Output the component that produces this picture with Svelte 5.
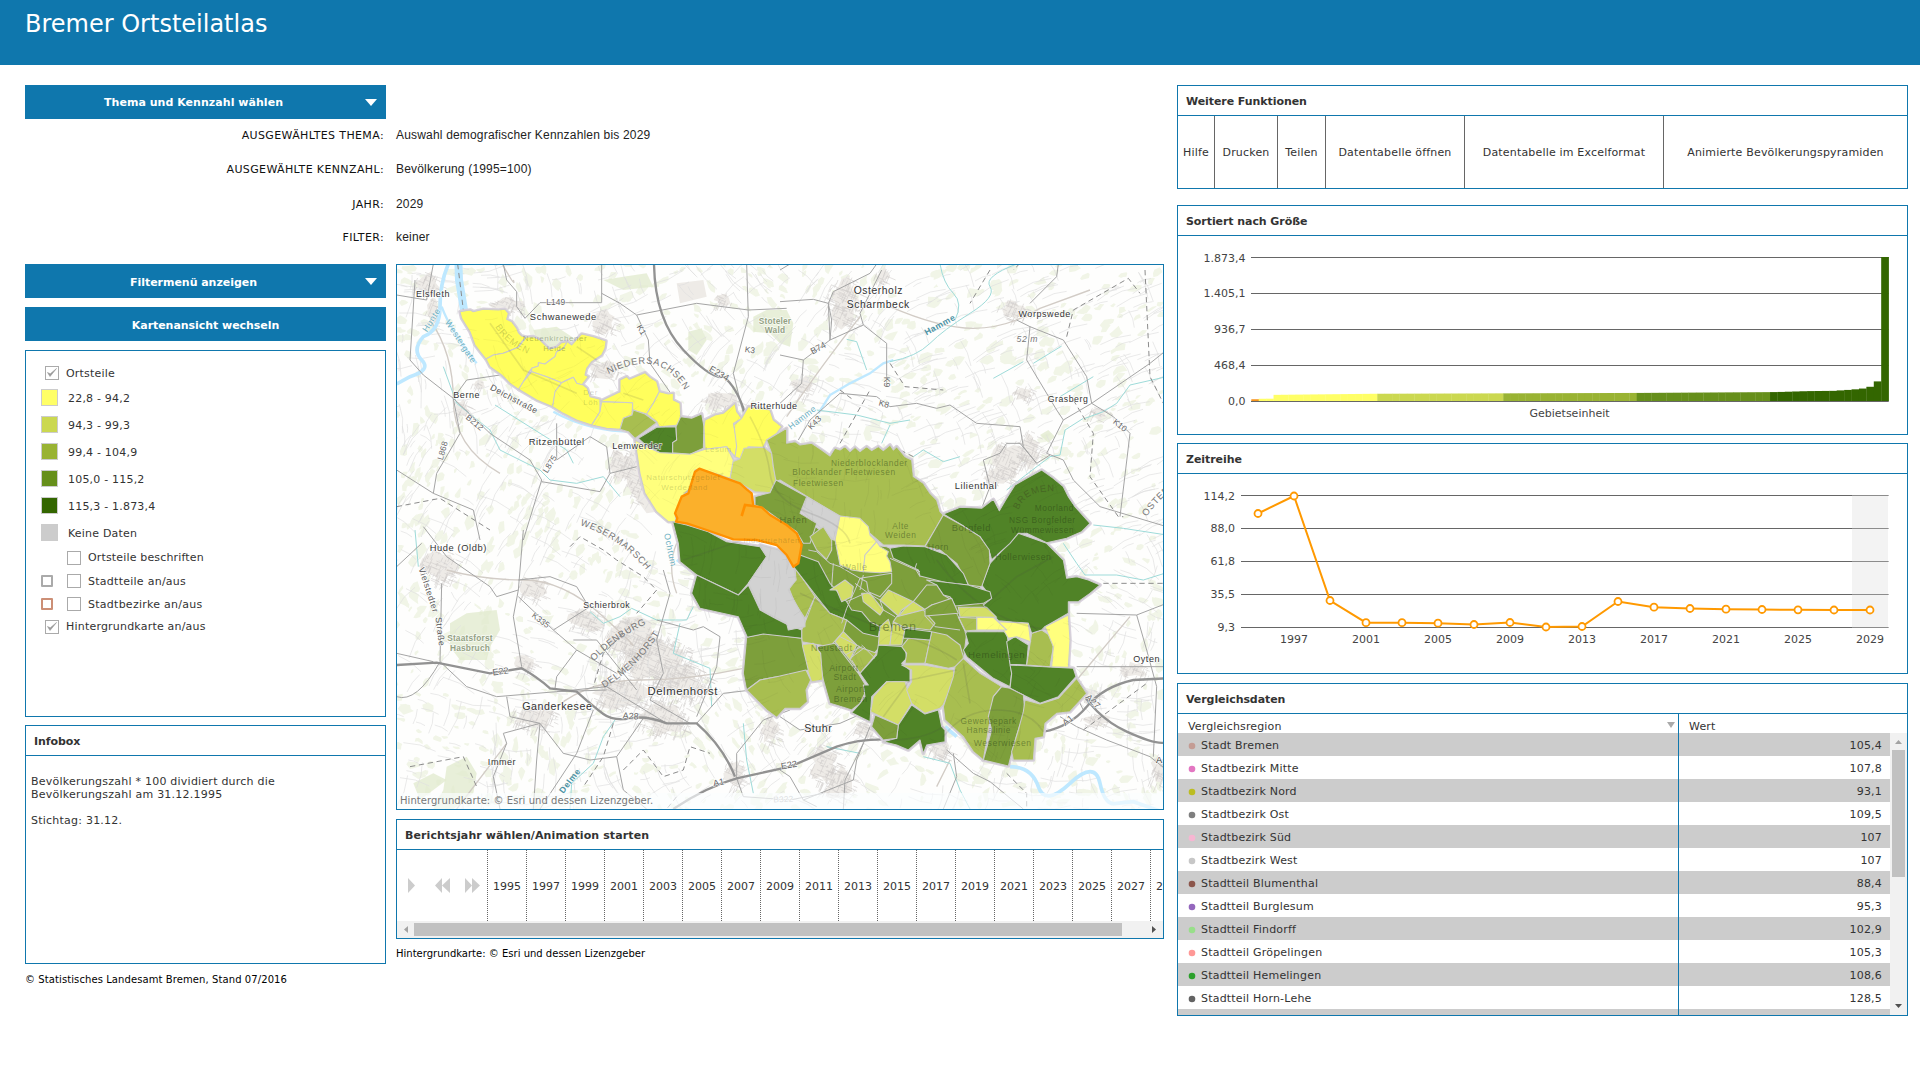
<script>
  const classes = [
    { color: '#ffff66', label: '22,8 - 94,2' },
    { color: '#cbd850', label: '94,3 - 99,3' },
    { color: '#99b333', label: '99,4 - 104,9' },
    { color: '#668f1b', label: '105,0 - 115,2' },
    { color: '#336600', label: '115,3 - 1.873,4' },
    { color: '#cccccc', label: 'Keine Daten' }
  ];

  const selection = [
    ['AUSGEWÄHLTES THEMA:', 'Auswahl demografischer Kennzahlen bis 2029'],
    ['AUSGEWÄHLTE KENNZAHL:', 'Bevölkerung (1995=100)'],
    ['JAHR:', '2029'],
    ['FILTER:', 'keiner']
  ];

  const functions = ['Hilfe', 'Drucken', 'Teilen', 'Datentabelle öffnen', 'Datentabelle im Excelformat', 'Animierte Bevölkerungspyramiden'];

  const years = Array.from({ length: 18 }, (_, i) => 1995 + i * 2);

  const rows = [
    ['Stadt Bremen', '105,4', '#c49c94'],
    ['Stadtbezirk Mitte', '107,8', '#e377c2'],
    ['Stadtbezirk Nord', '93,1', '#bcbd22'],
    ['Stadtbezirk Ost', '109,5', '#7f7f7f'],
    ['Stadtbezirk Süd', '107', '#f7b6d2'],
    ['Stadtbezirk West', '107', '#c7c7c7'],
    ['Stadtteil Blumenthal', '88,4', '#8c564b'],
    ['Stadtteil Burglesum', '95,3', '#9467bd'],
    ['Stadtteil Findorff', '102,9', '#98df8a'],
    ['Stadtteil Gröpelingen', '105,3', '#ff9896'],
    ['Stadtteil Hemelingen', '108,6', '#2ca02c'],
    ['Stadtteil Horn-Lehe', '128,5', '#636363'],
    ['', '', '']
  ];

  // Sorted bar chart: 86 districts, grouped by class
  const tail = [116, 118, 121, 124, 127, 129, 130, 131, 132, 138, 144, 152, 162, 185, 255, 1873.4];
  const ramp = (n, a, b) => Array.from({ length: n }, (_, i) => a + ((b - a) * i) / (n - 1));
  const bars = [
    [22.8, '#f7941d'],
    [29, classes[0].color], [30, classes[0].color],
    ...ramp(14, 80, 94).map((v) => [v, classes[0].color]),
    ...ramp(17, 94.3, 99.3).map((v) => [v, classes[1].color]),
    ...ramp(18, 99.4, 104.9).map((v) => [v, classes[2].color]),
    ...ramp(18, 105, 115.2).map((v) => [v, classes[3].color]),
    ...tail.map((v) => [v, classes[4].color])
  ];
  const barWidth = 637.3 / 86;
  const barTicks = ['1.873,4', '1.405,1', '936,7', '468,4', '0,0'];

  const seriesTicks = ['114,2', '88,0', '61,8', '35,5', '9,3'];
  const seriesY = [39.5, 22, 126.5, 148.7, 148.7, 149.2, 150.5, 148.5, 153, 152.5, 127.5, 133.2, 134.5, 135.2, 135.5, 135.8, 136, 136];
  const series = seriesY.map((y, i) => [80 + i * 36, y]);

  // Deterministic texture of fields, meadows and lanes for the base map
  let seed = 41;
  const rnd = () => ((seed = (seed * 16807) % 2147483647) / 2147483647);
  const slope = (x, y) => (x > 1500 && y < 900 ? -0.52 : x < 700 && y > 500 && y < 1000 ? -1.15 : (Math.floor(x / 300) + Math.floor(y / 260)) * 1.3);
  const meadows = Array.from({ length: 1700 }, () => {
    const x = rnd() * 2320, y = rnd() * 1650, s = 7 + rnd() * 15, a = slope(x, y);
    const pts = [];
    for (let k = 0; k < 7; k++) {
      const t = (k * Math.PI * 2) / 7, u = Math.cos(t) * s * (0.6 + rnd() * 0.8), v = Math.sin(t) * s * (0.2 + rnd() * 0.7);
      pts.push(`${(x + u * Math.cos(a) - v * Math.sin(a)).toFixed(0)},${(y + u * Math.sin(a) + v * Math.cos(a)).toFixed(0)}`);
    }
    return pts.join(' ');
  });
  let lanes = '';
  for (let i = 0; i < 1500; i++) {
    const x = rnd() * 2320, y = rnd() * 1650;
    const a = slope(x, y) + (rnd() > 0.72 ? Math.PI / 2 : 0) + (rnd() - 0.5) * 0.25, l = 25 + rnd() * 85;
    lanes += `M${x.toFixed(0)} ${y.toFixed(0)}l${(Math.cos(a) * l * 0.5).toFixed(0)} ${(Math.sin(a) * l * 0.5).toFixed(0)} ${(Math.cos(a + 0.25) * l * 0.5).toFixed(0)} ${(Math.sin(a + 0.25) * l * 0.5).toFixed(0)}`;
  }
  const towns = [[115, 70, 40, 35], [130, 150, 22, 35], [350, 135, 55, 25], [640, 190, 38, 45], [215, 445, 25, 28], [270, 375, 22, 15], [640, 330, 55, 30], [990, 425, 60, 32], [1000, 120, 28, 22], [690, 615, 35, 60], [735, 640, 28, 90], [1365, 130, 55, 90], [1240, 375, 38, 35], [1480, 45, 22, 28], [1870, 150, 45, 35], [1900, 400, 35, 25], [1860, 590, 60, 50], [1920, 570, 35, 60], [1830, 640, 55, 35], [2125, 460, 28, 22], [150, 920, 60, 55], [430, 980, 45, 38], [590, 1080, 60, 38], [730, 1130, 85, 60], [800, 1200, 110, 85], [690, 1300, 90, 50], [820, 1370, 85, 60], [870, 1270, 90, 60], [430, 1370, 70, 42], [400, 1210, 35, 28], [1035, 1540, 35, 45], [1140, 1410, 30, 50], [1300, 1510, 45, 60], [1345, 1570, 50, 60], [1425, 1410, 40, 30], [1650, 1470, 40, 35], [2230, 1230, 45, 25], [2100, 1310, 30, 25], [2320, 1530, 42, 50], [2120, 1380, 45, 22]];
  let streets = '';
  const townShapes = [];
  for (const [cx, cy, rx, ry] of towns) {
    const outline = [];
    for (let k = 0; k < 14; k++) {
      const t = (k * Math.PI * 2) / 14, r = 0.5 + rnd() * 0.55;
      outline.push(`${(cx + Math.cos(t) * rx * r).toFixed(0)},${(cy + Math.sin(t) * ry * r).toFixed(0)}`);
    }
    townShapes.push(outline.join(' '));
    const n = Math.round((rx * ry) / 40);
    for (let i = 0; i < n; i++) {
      const t = rnd() * 6.28, q = Math.sqrt(rnd()), d = rnd() > 0.5 ? 0.4 : 1.97, l = 8 + rnd() * 22;
      streets += `M${(cx + Math.cos(t) * rx * q).toFixed(0)} ${(cy + Math.sin(t) * ry * q).toFixed(0)}l${(Math.cos(d) * l).toFixed(0)} ${(Math.sin(d) * l).toFixed(0)}`;
    }
  }

  // Map fills: the class colours lightened by the layer's transparency; the last one is the northern yellow
  const mapFill = ['#ffff7d', '#d3de66', '#a8be50', '#7d9f3b', '#508327', '#d2d2d2', '#fffe5c'];

  // District shapes: [fill, offset x, offset y, points]
  const E = 1170, S = 810;
  const districts = [
    [3, E, S, '40,-60 160,30 320,50 600,170 640,240 560,310 550,390 300,350 230,430 100,300 30,170 60,110'],
    [6, 0, 0, '210,155 240,150 250,155 280,148 325,150 345,148 355,160 350,178 365,185 380,205 385,218 395,228 408,232 395,245 385,262 365,270 340,280 310,285 288,297 270,275 255,255 240,215 215,175'],
    [6, 0, 0, '288,297 310,285 340,280 365,270 385,262 408,232 430,230 450,240 478,268 500,262 515,248 532,245 520,265 500,275 495,290 480,300 465,312 445,308 445,318 425,325 415,338 400,365 386,388 360,370 335,345 300,320'],
    [6, 0, 0, '532,245 545,255 575,222 610,230 648,243 645,265 635,285 605,305 590,325 585,345 595,350 575,375 560,370 550,352 530,360 515,368 470,350 425,335 425,325 445,318 445,308 465,312 495,290 500,275 520,265'],
    [6, 0, 0, '386,388 400,365 425,335 470,350 515,368 495,400 488,440 440,420'],
    [6, 0, 0, '488,440 495,395 515,368 550,352 560,370 580,375 592,385 600,410 630,418 630,455 605,495 560,480 520,460'],
    [6, 0, 0, '605,495 630,455 635,425 728,428 726,465 700,475 690,508 650,505'],
    [6, 0, 0, '630,424 690,395 690,360 710,350 718,358 765,338 780,352 800,365 808,395 790,430 770,462 728,450 728,428'],
    [6, 0, 0, '808,395 835,402 850,400 850,420 870,430 872,465 868,495 808,500 800,485 770,462 790,430'],
    [2, 0, 0, '730,450 765,462 800,488 770,510 735,535 715,515 690,508 700,475 726,465'],
    [4, 0, 0, '745,535 800,502 858,500 860,540 848,548 848,580 810,578 770,558'],
    [3, 0, 0, '858,500 872,470 905,475 935,462 942,500 940,565 900,583 848,578 848,548 860,540'],
    [6, 0, 0, '945,480 975,465 1000,460 1035,430 1040,455 1055,475 1030,490 1040,540 1040,560 1035,590 1010,560 945,568 942,500'],
    [6, 0, 0, '1055,475 1075,440 1140,450 1150,480 1175,500 1160,520 1130,540 1120,562 1075,560 1050,596 1035,590 1040,560 1032,495'],
    [1, 0, 0, '1062,565 1122,562 1145,580 1150,620 1158,660 1140,698 1095,695 1050,670 1020,655 1028,605 1050,596'],
    [0, 0, 0, '735,540 770,560 810,578 900,583 945,568 1010,560 1030,600 1020,655 930,626 915,630 905,680 875,710 855,760 858,785 835,785 800,755 765,700 750,640'],
    [2, 0, 0, '1130,540 1190,505 1190,550 1215,545 1230,555 1265,550 1295,570 1320,588 1335,565 1350,570 1365,560 1380,575 1395,562 1410,575 1430,560 1445,572 1465,560 1480,572 1500,555 1510,570 1520,560 1545,590 1565,600 1570,650 1600,670 1620,700 1640,720 1650,755 1660,765 1635,810 1605,858 1540,855 1480,855 1440,820 1410,790 1350,770 1170,660 1158,665 1150,620 1145,580'],
    [5, E, 0, '80,710 180,768 160,838 58,745'],
    [3, 0, 0, '1158,660 1250,710 1230,760 1280,790 1260,850 1240,850 1220,815 1190,795 1120,745 1095,735 1095,710 1140,698'],
    [2, E, S, '90,20 130,-10 155,30 155,60 140,88 110,60'],
    [0, E, S, '180,-42 240,-35 265,-10 270,15 290,35 255,75 250,125 215,120 180,105 165,30'],
    [0, E, S, '290,35 300,50 325,65 320,78 330,95 335,125 300,128 250,125 255,75'],
    [2, E, S, '45,110 105,200 75,265 45,220 25,170 48,150'],
    [4, E, S, '60,75 115,95 150,160 200,215 215,240 245,245 270,275 300,290 295,320 250,310 200,270 150,250 110,200 42,112'],
    [2, E, S, '105,200 150,250 200,270 190,305 150,350 120,345 65,335 65,300 80,265'],
    [3, E, S, '112,350 165,340 235,430 262,475 240,520 215,540 185,530 150,520 130,450'],
    [1, E, S, '190,305 230,345 210,390 165,335'],
    [2, E, S, '235,350 290,370 270,395 240,430 210,390'],
    [1, E, S, '55,345 100,340 122,370 128,450 95,455 75,400'],
    [3, 0, S, '1070,322 1125,310 1235,325 1238,350 1255,420 1200,445 1160,440 1110,450 1070,480 1060,430'],
    [2, 0, S, '1070,480 1110,450 1160,440 1248,420 1262,450 1248,480 1252,515 1230,535 1185,535 1160,562 1130,540'],
    [4, 0, S, '848,-25 890,-15 955,5 1010,35 1110,50 1130,80 1075,160 1045,195 920,135 870,95 865,40'],
    [4, 0, S, '920,135 1045,195 1075,165 1110,240 1155,265 1195,285 1235,300 1235,325 1120,312 1072,322 1045,260 930,235 905,190'],
    [5, 0, S, '1110,45 1165,60 1200,90 1212,115 1218,150 1195,180 1245,270 1245,290 1195,300 1190,280 1115,240 1075,160 1130,80'],
    [4, E, S, '295,345 375,350 380,385 365,400 390,420 390,455 320,455 275,500 270,575 215,548 240,520 255,500 250,465 265,465 240,430 290,375'],
    [1, E, S, '320,455 375,455 395,520 355,585 272,545 280,500'],
    [1, E, S, '365,405 430,405 520,420 525,440 490,525 480,535 435,550 395,520 380,480 395,455 395,420'],
    [2, E, S, '365,350 385,325 450,330 435,400 375,400 380,370'],
    [2, E, S, '455,305 500,315 540,345 550,380 550,405 505,415 435,400'],
    [2, E, S, '550,385 600,430 665,470 640,500 635,545 625,600 610,690 580,665 550,620 495,570 490,530 520,440 525,410'],
    [4, E, S, '555,305 680,305 685,340 695,430 690,470 640,445 560,380 550,360 565,340'],
    [4, E, S, '680,335 705,320 745,345 740,405 690,403'],
    [4, E, S, '690,405 880,415 888,440 835,500 780,520 690,475 695,430'],
    [3, E, S, '665,470 690,475 730,495 735,545 715,600 695,670 685,708 610,690 635,600 625,560 640,500'],
    [2, E, S, '735,510 780,522 835,505 890,445 920,490 870,545 830,550 795,580 790,620 765,625 760,690 700,690 695,665 715,600 730,545'],
    [2, E, S, '755,310 785,300 815,320 820,350 810,410 740,405'],
    [4, E, S, '715,10 800,40 850,90 860,145 890,140 925,150 960,165 930,190 895,215 865,215 865,250 795,290 785,300 755,310 745,280 655,272 610,225 635,205 605,165 630,100'],
    [0, E, S, '795,290 865,255 870,330 865,412 815,410 820,350'],
    [0, E, S, '655,275 745,280 752,335 710,320 685,325'],
    [0, E, S, '590,262 640,262 680,300 590,300'],
    [1, E, S, '535,232 620,232 650,262 540,260'],
    [2, E, S, '535,262 590,265 590,300 555,303'],
    [4, E, 0, '490,762 540,742 605,745 640,718 658,752 680,715 705,675 740,655 785,630 820,655 850,680 865,710 885,740 930,790 905,815 860,835 800,848 740,820 715,820 690,850 635,900 630,880 600,830 545,795'],
    [3, E, 0, '490,765 545,795 600,830 628,870 630,910 605,980 565,975 530,910 480,870 435,860'],
    [4, E, S, '330,55 370,48 435,50 500,75 550,130 565,165 500,158 420,138 415,120 340,85'],
    [4, E, S, '440,150 565,165 630,185 635,205 610,220 525,228 510,200 490,195 470,165'],
    [1, E, S, '300,210 325,180 400,215 365,240 355,258'],
    [1, E, S, '400,215 435,238 355,260 375,235'],
    [1, E, S, '150,180 195,150 220,170 215,200 185,215 170,180'],
    [1, E, S, '245,190 270,190 310,240 300,255 250,215'],
    [1, E, S, '300,290 325,268 335,300 330,345 295,345'],
    [1, E, S, '340,275 375,300 365,345 330,345 335,300'],
    [2, E, S, '350,260 430,240 465,280 450,300 370,290 340,275'],
    [4, E, S, '370,325 375,295 455,305 450,330 385,325'],
    [3, E, S, '400,215 440,165 470,165 490,195 515,210 455,225 435,238'],
    [3, E, S, '435,238 455,225 515,205 535,250 435,258'],
    [3, E, S, '240,145 335,130 335,160 300,200 265,185 260,155'],
    [4, E, S, '395,525 435,552 475,540 485,590 495,600 495,635 440,645 430,670 420,630 385,660 350,645 310,635 350,625 355,585'],
    [3, E, S, '285,555 355,585 350,625 310,630 275,590']
  ];

  const innerLines = [
    [E, S, 'M85 60L110 65 150 100 180 110 240 145 225 180 200 235 185 280M225 160L265 190 300 210M160 100L155 170M200 215L255 190M250 135L240 180M180 320L240 350M195 375L245 350M210 385L255 352M245 345L285 385M215 390L240 430M310 240L345 260M300 210L310 240M435 258L465 290 540 300M530 250L560 310M410 100L405 115 420 140M330 85L420 125']
  ];

  const places = [
    [129, 110, 'Elsfleth', 27], [520, 180, 'Schwanewede', 28], [497, 136, 'L149', 24, 'road'], [230, 414, 'Berne', 27], [500, 555, 'Ritzenbüttel', 28], [742, 567, 'Lemwerder', 27], [1152, 448, 'Ritterhude', 27],
    [1465, 103, 'Osterholz', 31], [1465, 145, 'Scharmbeck', 31], [1964, 172, 'Worpswede', 27], [1912, 247, '52 m', 26, 'peak'], [2034, 427, 'Grasberg', 26], [1758, 688, 'Lilienthal', 28],
    [205, 874, 'Hude (Oldb)', 28], [650, 1043, 'Schierbrok', 26], [502, 1351, 'Ganderkesee', 32], [878, 1304, 'Delmenhorst', 34], [336, 1515, 'Immer', 27], [1285, 1416, 'Stuhr', 32], [2270, 1206, 'Oyten', 27], [2308, 1508, 'A', 28]
  ];
  const faintPlaces = [
    [1155, 193, 'Stoteler', 25], [1155, 220, 'Wald', 25], [240, 1143, 'Staatsforst', 25], [240, 1172, 'Hasbruch', 25]
  ];
  const insidePlaces = [
    [495, 243, 'Neuenkirchener', 24, 'soft'], [494, 274, 'Heide', 23, 'soft'], [602, 405, 'Der', 24, 'pale'], [602, 436, 'Löh', 24, 'pale'], [985, 577, 'Lesum', 24, 'pale'], [880, 660, 'Naturschutzgebiet', 24, 'pale'], [884, 689, 'Werderland', 24, 'pale'],
    [1438, 617, 'Niederblocklander', 25], [1362, 646, 'Blocklander Fleetwiesen', 25], [1285, 678, 'Fleetwiesen', 25], [1210, 788, 'Hafen', 28], [1532, 808, 'Alte', 25], [1532, 835, 'Weiden', 25], [1744, 814, 'Borgfeld', 28],
    [1993, 752, 'Moorland', 25], [1957, 789, 'NSG Borgfelder', 25], [1958, 820, 'Wümmewiesen', 25], [1900, 901, 'Hollerwiesen', 26], [1395, 930, 'Walle', 27, 'soft'], [1645, 870, 'Horn', 26], [1508, 1114, 'Bremen', 38], [1325, 1172, 'Neustadt', 28], [1362, 1233, 'Airport', 26], [1365, 1261, 'Stadt', 26], [1382, 1295, 'Airport', 26], [1382, 1325, 'Bremen', 26],
    [1820, 1193, 'Hemelingen', 29], [1796, 1392, 'Gewerbepark', 25], [1796, 1420, 'Hansalinie', 25], [1838, 1457, 'Weserwiesen', 26], [1145, 848, 'Industriehäfen', 23, 'pale']
  ];
  const rotated = [
    [125, 180, -58, 'Hunte', 'water'], [212, 245, 57, 'Westergate', 'water'], [1650, 195, -29, 'Hamme', 'water strong'], [1237, 473, -38, 'Hamme', 'water'], [540, 1563, -52, 'Delme', 'water strong'], [840, 870, 78, 'Ochtum', 'water'],
    [372, 418, 28, 'Deichstraße', 'street'], [254, 488, 40, 'B212', 'road'], [158, 572, -74, 'L868', 'road'], [480, 612, -58, 'L875', 'road'], [754, 210, 60, 'K1', 'road'], [1080, 270, 8, 'K3', 'road'], [987, 341, 30, 'E234', 'road big'], [1285, 265, -28, 'B74', 'road big'], [1490, 366, 90, 'K9', 'road'], [1482, 432, 15, 'K8', 'road'], [1274, 488, -45, 'K43', 'road'], [2190, 496, 38, 'K10', 'road'],
    [115, 990, 72, 'Vielstedter', 'street'], [150, 1115, 83, 'Straße', 'street'], [452, 1081, 37, 'K335', 'road'], [332, 1235, -8, 'E22', 'road big'], [722, 1369, 3, 'A28', 'road big'], [986, 1568, -12, 'A1', 'road big'], [1197, 1516, -10, 'E22', 'road big'], [2034, 1382, -38, 'A1', 'road big'], [2108, 1325, 45, 'A27', 'road big'], [1180, 1618, -3, 'B322', 'road pale']
  ];
</script>

{#snippet caption(text)}
  <h2 class="caption">{text}</h2>
{/snippet}

<header><h1>Bremer Ortsteilatlas</h1></header>

<main>
  <div class="workspace">
    <button class="bar">
      <span>Thema und Kennzahl wählen</span>
      <svg class="caret" viewBox="0 0 12 7"><path d="M0 0h12L6 7z" /></svg>
    </button>
    <dl class="selection">
      {#each selection as [label, value]}
        <div><dt>{label}</dt><dd>{value}</dd></div>
      {/each}
    </dl>

    <div class="columns">
      <aside>
        <button class="bar">
          <span class="lower">Filtermenü anzeigen</span>
          <svg class="caret" viewBox="0 0 12 7"><path d="M0 0h12L6 7z" /></svg>
        </button>
        <button class="bar second"><span class="full">Kartenansicht wechseln</span></button>

        <section class="panel legend">
          <label class="layer top"><i class="check"><svg viewBox="0 0 12 12"><path d="M1.500 5.500 4 9.500 10.500 1.500 4.300 6.800z" /></svg></i>Ortsteile</label>
          {#each classes as c}
            <div class="class-row"><svg class="swatch" viewBox="0 0 17 17"><rect x=".5" y=".5" width="16" height="16" fill={c.color} /></svg><span>{c.label}</span></div>
          {/each}
          <div class="toggle"><span class="outline-slot"></span><i class="check"></i>Ortsteile beschriften</div>
          <div class="toggle"><span class="outline-slot"><b class="outline grey"></b></span><i class="check"></i><span class="text">Stadtteile an/aus</span></div>
          <div class="toggle"><span class="outline-slot"><b class="outline red"></b></span><i class="check"></i><span class="text">Stadtbezirke an/aus</span></div>
          <label class="layer"><i class="check"><svg viewBox="0 0 12 12"><path d="M1.500 5.500 4 9.500 10.500 1.500 4.300 6.800z" /></svg></i>Hintergrundkarte an/aus</label>
        </section>

        <section class="panel info">
          {@render caption('Infobox')}
          <p>Bevölkerungszahl * 100 dividiert durch die<br />Bevölkerungszahl am 31.12.1995</p>
          <p>Stichtag: 31.12.</p>
        </section>
        <p class="source">© Statistisches Landesamt Bremen, Stand 07/2016</p>
      </aside>

      <div class="center">
        <section class="panel map">
          <svg viewBox="21 15 2298 1632">
            <defs>
              <path id="arc-nieder" d="M655 342Q760 290 820 325T905 440" />
              <path id="arc-weser" d="M570 795Q690 835 765 925" />
              <path id="arc-olden" d="M612 1204Q680 1130 785 1085" />
              <path id="arc-delmen" d="M642 1284Q750 1220 815 1110" />
              <path id="arc-bremen-nw" d="M315 200Q350 260 435 290" />
              <path id="arc-bremen-ne" d="M1885 750Q1910 685 2010 695" />
              <path id="arc-oster" d="M2270 770Q2300 725 2345 690" />
              <clipPath id="city">
                {#each districts as [, dx, dy, pts]}<polygon points={pts} transform="translate({dx} {dy})" />{/each}
              </clipPath>
            </defs>
            <rect x="0" y="0" width="2340" height="1660" fill="#fefefd" />
            <g fill="#f1f5e7">{#each meadows as m}<polygon points={m} />{/each}</g>
            <g class="wood">
              <path d="M1090 170L1130 150 1190 150 1210 190 1200 260 1170 250 1140 220 1090 215zM895 215L935 205 950 240 920 285 895 270z" />
              <path d="M180 1090L230 1060 320 1050 330 1110 300 1160 290 1200 210 1200 180 1160zM170 1520L230 1490 260 1540 250 1600 190 1647 130 1647 160 1590zM640 60L700 50 770 40 790 80 700 90zM1950 525L1975 510 1995 530 1975 548z" />
              <path d="M430 210L500 200 560 240 520 290 450 270zM70 1570L130 1540 170 1560 90 1620z" />
            </g>
            <g fill="#eeebe7">
              {#each townShapes as t}<polygon points={t} />{/each}
              <path d="M720 590L745 590 760 680 800 755 770 760 720 690zM860 70L940 60 950 110 870 130z" />
            </g>
            <path class="lanes" d={lanes} />
            <path class="streets" d={streets} />

            <g class="rail">
              <path d="M120 180Q190 280 190 420T330 640M330 0Q380 90 370 60M1190 470Q1300 310 1410 170M1500 140Q1650 205 1750 205T1950 145L2100 90M170 930Q280 960 400 960T640 1070 720 1150M500 1340Q600 1260 750 1260T1060 1225 1170 1210M350 1450L200 1647M2220 1070L2060 1260 2035 1290M1680 1500L1640 1580M860 850Q830 920 860 1000" />
            </g>
            <g class="river">
              <path d="M205 0L207 60 222 150" stroke-width="24" />
              <path d="M175 12Q150 70 150 140T100 230Q65 270 95 300T60 350L20 372" stroke-width="11" />
              <path d="M155 140Q180 210 260 310M490 455Q600 515 730 515M1285 460L1320 405 1380 370 1440 340 1480 310 1510 300M860 900L920 945" stroke-width="7" />
              <path d="M1860 1520Q1925 1520 1945 1580T2040 1570 2130 1570 2180 1630L2230 1625 2330 1660M1665 1400L1700 1430" stroke-width="11" />
            </g>
            <g class="stream">
              <path d="M1500 305Q1580 290 1620 250T1740 160 1800 80 1880 12M1650 12Q1660 70 1690 100T1695 180M1370 238L1400 245 1430 330M1280 450L1400 465 1500 490 1560 480M1500 495L1475 550M1570 590L1600 570 1660 605 1710 590M1930 310L2015 258M1810 355L1900 305M2010 410L2110 350M2085 475L2140 455 2180 430 2220 375 2330 350M1850 690Q1900 650 1980 590L2010 585 2025 510 2080 475M2110 795L2200 805 2330 825" />
              <path d="M160 320L200 430 300 510 330 570 450 630 480 660 560 670 640 650 690 710M315 435L530 570 550 610M75 810L85 920M600 1055L640 1090 690 1070 725 1045 800 1080 890 1080 910 1040M870 1090L850 1180 960 1225 965 1340M675 1380L640 1430 610 1510 545 1570 540 1647M1060 1390L1070 1500 1090 1600M1310 1460L1410 1480M1600 1490L1680 1510 1710 1590 1740 1647M2020 850L2060 910 2085 945 2180 945 2260 960 2330 938" />
            </g>
            <g class="dashed">
              <path d="M203 12L220 150M540 860L570 830 640 870 680 900 760 950 800 990 740 1060M720 1100L640 1180 610 1280M20 740L150 715 300 810M700 1530L760 1470 820 1550 880 1530 900 1460 960 1480M670 1390L640 1490 580 1580M2265 30L2280 350 2320 430M1500 310L1545 380 1660 390M2050 420L2110 520 2100 650 2185 770 2200 770M1570 590L1530 570M2030 230L2050 150 2215 55 2250 100M1800 30L1740 130M1890 10L1870 30M60 1520L220 1490 260 1580M1850 1540L1910 1600 1910 1647M2140 970L2330 970M2080 1410L2270 1270M860 1610L830 1647M1350 390L1390 420M1350 550L1440 390" />
            </g>
            <g class="minor">
              <path d="M340 12L350 60 380 95 380 140 405 175 450 128 635 128 635 12M635 100L690 130 740 165 920 130 1075 150 1190 145M740 165L775 240 780 310 870 440M20 105L110 120 130 12M75 60L60 300 100 345 190 415 300 520 420 600 455 660 400 840M190 415L230 360 330 345M190 415L210 520 140 640 130 700 20 630M455 665L630 695 660 640 740 620M660 640L650 560 600 530 500 600M500 600L500 490M130 700L250 750 270 840M1070 12L1075 170 1030 340 1060 460M1170 30L1200 12" />
              <path d="M1170 125L1270 118 1315 130 1320 240M1460 12L1440 40 1330 95 1315 130 1325 180 1320 240 1240 300 1235 370 1170 430M1320 240L1420 195 1490 250 1490 380M1420 195L1410 160 1475 30M1170 285L1240 300M1225 540L1260 480 1350 400 1460 410 1500 440 1580 430 1640 445 1680 435 1760 490 1890 500 1900 560 1940 610M2005 12L2000 50 1920 130M1880 180L1920 200 1910 300 2000 450 2020 480 1970 580M1920 200L2020 240 2090 350 2105 430 2170 470 2220 520 2190 770M2020 480L2105 430 2280 310 2330 270M1970 580L2020 600 2050 660 2130 740 2330 800M1775 745L1800 680 1780 600 1830 580 1850 550 1890 550 1940 610 1980 585" />
              <path d="M100 800L170 890 300 980 320 1010 385 990M95 850L20 920M400 810L385 990 370 1070 395 1220M385 960L480 950 560 980 590 1030M385 1010L490 1110 560 1170 500 1250 495 1285M490 1110L600 1040M560 1170L680 1240M150 1205L155 970M20 1180L130 1205M20 1310Q80 1330 150 1205L230 1280 320 1310 500 1295 650 1290M350 1310L360 1370 450 1390 520 1480 600 1500 680 1490 760 1375M450 1390L340 1420 350 1450 310 1550 330 1647M450 1390L440 1500 430 1647M610 1350L560 1480 450 1647M680 1490L700 1590 770 1647M820 930L840 1000 800 1140 820 1240 780 1320 900 1390M800 1080L910 1110 940 1100 990 1130 980 1220 920 1370M920 1390L1000 1300 1170 1280M1040 1555L1040 1480 1120 1380 1200 1350M1040 1555L1060 1610 1200 1620 1300 1600M500 1295L650 1280 830 1390M550 1140L620 1140 740 1290" />
              <path d="M1170 1370L1230 1410 1350 1390 1440 1350M1170 1530L1200 1550 1240 1620 1280 1640M1440 1400L1400 1500 1390 1560 1240 1620M1360 1647L1365 1560 1420 1450M1670 1470L1750 1540 1800 1565 1900 1647M2010 1370L2060 1400 2150 1440 2280 1490 2330 1530M2060 1220L2330 1220M2060 1060L2240 1065 2330 1030M2240 1065L2270 1170 2300 1280 2290 1490M2050 1290L2080 1350M1690 1480L1700 1550 1660 1647" />
            </g>
            <g class="highway">
              <path d="M792 12Q795 180 880 270T1000 350Q1040 380 1065 460M20 1215L140 1208 300 1240 395 1225Q440 1250 480 1285L560 1295Q610 1340 640 1362T720 1375 830 1390L920 1390Q1000 1460 1035 1550M850 1647Q950 1580 1040 1555L1200 1520 1340 1460Q1400 1438 1480 1438M1960 1415Q2040 1400 2090 1340T2230 1260L2330 1255M2050 1255Q2110 1370 2210 1415T2330 1445" />
            </g>
            <g class="labels faint">
              {#each faintPlaces as [x, y, t, s]}<text {x} {y} font-size={s}>{t}</text>{/each}
            </g>

            <g class="halo">
              {#each districts as [, dx, dy, pts]}<polygon points={pts} transform="translate({dx} {dy})" />{/each}
            </g>
            <g class="districts">
              {#each districts as [c, dx, dy, pts]}<polygon points={pts} fill={mapFill[c]} transform="translate({dx} {dy})" />{/each}
            </g>
            <g class="inner">
              {#each innerLines as [dx, dy, d]}<path {d} transform="translate({dx} {dy})" />{/each}
            </g>
            <path class="ghost-lanes" d={lanes} clip-path="url(#city)" />
            <g class="ghost-roads">
              <path d="M1080 470Q1130 560 1140 640T1260 760 1380 850M1660 1430Q1720 1350 1820 1350T1960 1415M1500 1440Q1600 1440 1660 1400M1230 1000Q1400 1080 1520 1120T1700 1200M1640 900Q1780 1090 1980 1110M1720 1210L1740 1330M880 700L1000 640M880 900L1060 840M1480 1370L1560 1260 1700 1230M300 190L400 330 560 400M560 260L620 300M700 400L760 420M1780 1040L1880 950 1990 890" />
            </g>
            <path class="picked" d="M928 626L1050 670 1070 688 1085 700 1090 738 1115 742 1140 765 1190 795 1220 820 1235 855 1225 910 1210 920 1190 885 1160 855 1100 840 1030 838 950 810 890 790 858 785 862 775 855 760 875 710 895 700 915 635z" />
            <path class="spur" d="M1090 738L1065 735 1055 768" />
            <g class="labels inside">
              {#each insidePlaces as [x, y, t, s, kind]}<text {x} {y} font-size={s} class={kind}>{t}</text>{/each}
            </g>
            <g class="labels">
              {#each places as [x, y, t, s, kind]}<text {x} {y} font-size={s} class={kind}>{t}</text>{/each}
              {#each rotated as [x, y, a, t, kind]}<text class={kind} transform="translate({x} {y}) rotate({a})" dy="8">{t}</text>{/each}
            </g>
            <g class="regions">
              <text><textPath href="#arc-nieder">NIEDERSACHSEN</textPath></text>
              <text><textPath href="#arc-weser">WESERMARSCH</textPath></text>
              <text><textPath href="#arc-olden">OLDENBURG</textPath></text>
              <text><textPath href="#arc-delmen">DELMENHORST</textPath></text>
              <text class="dim light"><textPath href="#arc-bremen-nw">BREMEN</textPath></text>
              <text class="dim"><textPath href="#arc-bremen-ne">BREMEN</textPath></text>
              <text><textPath href="#arc-oster">OSTERHOLZ</textPath></text>
            </g>
          </svg>
          <p class="credit">Hintergrundkarte: © Esri und dessen Lizenzgeber.</p>
        </section>

        <section class="panel timeline">
          {@render caption('Berichtsjahr wählen/Animation starten')}
          <div class="track">
            <svg class="controls" viewBox="0 0 90 71">
              <path d="M11 28v15l7-7.500zM45 28v15l-7-7.500zM53 28v15l-8-7.500zM68 28v15l7-7.500zM75 28v15l8-7.500z" />
            </svg>
            {#each years as y}<span class="year">{y}</span>{/each}
          </div>
          <div class="hscroll">
            <svg viewBox="0 0 17 17"><path d="M11 5v7L7 8.500z" fill="#a3a3a3" /></svg>
            <i></i>
            <svg viewBox="0 0 17 17"><path d="M6 5v7l4-3.500z" fill="#505050" /></svg>
          </div>
        </section>
        <p class="source map-source">Hintergrundkarte: © Esri und dessen Lizenzgeber</p>
      </div>
    </div>
  </div>

  <div class="side">
    <section class="panel functions">
      {@render caption('Weitere Funktionen')}
      <nav>{#each functions as f}<a href="#top">{f}</a>{/each}</nav>
    </section>

    <section class="panel sorted">
      {@render caption('Sortiert nach Größe')}
      <svg viewBox="0 0 729 198">
        {#each barTicks as t, i}
          <text x="67.500" y={25.500 + i * 35.900} text-anchor="end">{t}</text>
          <path class="grid" d="M73 {21.500 + i * 36}H710.500" />
        {/each}
        {#each bars as [v, c], i}
          <rect x={73.300 + i * barWidth} y={165 - (v / 1873.4) * 144} width={barWidth + 0.300} height={(v / 1873.4) * 144} fill={c} />
        {/each}
        <path class="grid" d="M73 165.500H710.500" />
        <text x="391.500" y="180.500" text-anchor="middle">Gebietseinheit</text>
      </svg>
    </section>

    <section class="panel series">
      {@render caption('Zeitreihe')}
      <svg viewBox="0 0 729 200">
        {#each seriesTicks as t, i}
          <text x="57" y={25.500 + i * 32.900} text-anchor="end">{t}</text>
          <path class="grid" d="M63 {21.500 + i * 33}H710.500" />
        {/each}
        <rect x="674" y="21" width="36" height="133" fill="#dcdcdc" fill-opacity=".33" />
        <polyline points={series.map((p) => p.join(',')).join(' ')} />
        {#each series as [cx, cy]}<circle {cx} {cy} r="3.500" />{/each}
        {#each series as [x], i}
          {#if i % 2}<text {x} y="169" text-anchor="middle">{years[i]}</text>{/if}
        {/each}
      </svg>
    </section>

    <section class="panel compare">
      {@render caption('Vergleichsdaten')}
      <div class="table-head">
        <span class="region">Vergleichsregion <svg viewBox="0 0 8 6"><path d="M0 0h8L4 6z" /></svg></span>
        <span class="value-head">Wert</span>
      </div>
      <div class="table-body">
        <div class="table-rows">
          {#each rows as [name, value, color]}
            <div class="table-row">
              <span class="name">{#if color}<svg viewBox="0 0 8 8"><circle cx="4" cy="4" r="3.300" fill={color} /></svg>{/if}{name}</span>
              <span class="value">{value}</span>
            </div>
          {/each}
        </div>
        <div class="vscroll">
          <svg viewBox="0 0 17 17"><path d="M5 11h7L8.500 7z" fill="#a3a3a3" /></svg>
          <i></i>
          <svg class="down" viewBox="0 0 17 17"><path d="M5 6h7L8.500 10z" fill="#505050" /></svg>
        </div>
      </div>
    </section>
  </div>
</main>

<style>
  :global(body) { background: #fff; }
  :global(#app) { font: 11px/13px 'DejaVu Sans', sans-serif; color: #333; height: 1080px; overflow: hidden; }
  * { box-sizing: border-box; }
  h1, h2, p, dl, dd { margin: 0; }
  svg { display: block; }
  header { height: 65px; background: #0f77ad; padding: 9px 25px; }
  h1 { color: #fff; font-size: 24px; font-weight: 400; line-height: 30px; }
  main { display: flex; gap: 13px; padding: 20px 12px 0 25px; }
  .workspace { width: 1139px; }
  .bar { display: flex; align-items: center; width: 361px; height: 34px; padding: 0 9px 0 0; border: 0; border-radius: 0; background: #0f77ad; color: #fff; font: bold 11px/13px 'DejaVu Sans', sans-serif; }
  .bar span { flex: 1; padding-right: 3px; text-align: center; letter-spacing: .04px; }
  .bar .lower { padding-top: 2px; letter-spacing: -.04px; }
  .bar .full { padding: 2px 0 0 9px; letter-spacing: -.05px; }
  .caret { width: 12px; height: 7px; fill: #fff; }
  .second { margin-top: 9px; }
  .selection { padding-bottom: 11px; color: #222; }
  .selection div { display: grid; grid-template-columns: 359px 1fr; column-gap: 12px; align-items: center; height: 32px; }
  .selection div:nth-child(2) { height: 36px; }
  .selection div:nth-child(3) { height: 34px; }
  dt { text-align: right; letter-spacing: .37px; color: #111; }
  dd { font: 12px/14px 'Liberation Sans', sans-serif; letter-spacing: .18px; }
  .columns { display: flex; gap: 10px; }
  aside { width: 361px; }
  .panel { border: 1px solid #0f77ad; background: #fff; overflow: hidden; }
  .caption { height: 30px; padding: 1px 8px 0; border-bottom: 1px solid #0f77ad; font-size: 11px; line-height: 30px; letter-spacing: -.07px; font-weight: 700; }
  .timeline .caption { letter-spacing: .1px; }
  .legend { height: 367px; margin-top: 9px; padding: 12px 15px; letter-spacing: .2px; }
  .layer { display: flex; align-items: center; gap: 7px; height: 23px; padding-left: 4px; }
  .layer.top { height: 20px; margin-bottom: 1px; }
  .check { display: block; width: 14px; height: 14px; border: 1px solid #aaa; background: #fff; }
  .check path { fill: #999; stroke: #999; stroke-width: .6; }
  .class-row { display: flex; align-items: center; gap: 10px; height: 27px; }
  .class-row span { padding-top: 1px; }
  .swatch { width: 17px; height: 17px; }
  .swatch rect { stroke: #ccc; }
  .toggle { display: flex; align-items: center; gap: 7px; height: 23px; letter-spacing: .16px; }
  .toggle .text { padding-top: 1px; letter-spacing: .26px; }
  .outline-slot { width: 19px; }
  .outline { display: block; width: 12px; height: 12px; border: 2px solid #aaa; border-radius: 1px; }
  .outline.red { border-color: #cc8f76; }
  .info { height: 239px; margin-top: 8px; }
  .info p { padding: 0 5px; letter-spacing: .23px; }
  .info .caption + p { padding-top: 19px; padding-bottom: 13px; }
  .source { margin-top: 9px; font-size: 10px; line-height: 14px; color: #000; letter-spacing: .09px; }
  .center { width: 768px; }
  .map { height: 546px; position: relative; }
  .map > svg { width: 766px; height: 544px; }
  .credit { position: absolute; inset: auto 0 0 0; height: 16px; padding-left: 3px; background: rgba(250, 253, 255, .65); color: #777; font-size: 10px; line-height: 16px; letter-spacing: .05px; }
  .wood { fill: #e2ebd0; fill-opacity: .8; }
  .lanes { fill: none; stroke: #e0e0e0; stroke-width: 2; }
  .streets { fill: none; stroke: #d0ccc9; stroke-width: 1.700; }
  .minor { fill: none; stroke: #a5a5a5; stroke-width: 3; stroke-linejoin: round; }
  .highway { fill: none; stroke: #929292; stroke-width: 7; }
  .rail { fill: none; stroke: #d2ccc6; stroke-width: 4; }
  .river { fill: none; stroke: #bee8ff; }
  .stream { fill: none; stroke: #9edbd9; stroke-width: 3; }
  .dashed { fill: none; stroke: #8c8c8c; stroke-width: 3; stroke-dasharray: 16 11; }
  .halo { fill: #fff; stroke: #d8d1dc; stroke-width: 11; stroke-linejoin: round; }
  .districts { stroke: #ccc; stroke-width: 3.200; stroke-linejoin: round; }
  .inner { fill: none; stroke: #ccc; stroke-width: 3; }
  .ghost-lanes { fill: none; stroke: #333; stroke-opacity: .07; stroke-width: 2; }
  .ghost-roads { fill: none; stroke: #444; stroke-opacity: .13; stroke-width: 5; }
  .picked { fill: #fbb02b; stroke: #ff9100; stroke-width: 7; stroke-linejoin: round; }
  .spur { fill: none; stroke: #ff9100; stroke-width: 8; }
  .labels, .regions { font-family: 'Liberation Sans', sans-serif; }
  .labels text { text-anchor: middle; fill: #333; letter-spacing: 1.700px; stroke: #fff; stroke-width: 4; stroke-opacity: .75; paint-order: stroke; }
  .labels.faint text { fill: #93a183; font-weight: 700; letter-spacing: .6px; }
  .labels.inside text { fill: #243a12; fill-opacity: .45; stroke: none; }
  .labels.inside text.soft { fill-opacity: .34; }
  .labels.inside text.pale { fill-opacity: .2; }
  .labels text.peak { font-style: italic; fill: #777; }
  .labels text.road { font-size: 25px; fill: #666; letter-spacing: .3px; }
  .labels text.big { font-size: 27px; }
  .labels:not(.inside) text.pale { fill: #aaa; }
  .labels text.street { font-size: 26px; fill: #555; }
  .labels text.water { font-size: 26px; fill: #6cb0c2; stroke-opacity: .4; }
  .labels text.strong { font-weight: 700; fill: #4c93a5; }
  .regions text { font-size: 28px; fill: #777; letter-spacing: 2px; }
  .regions .dim { fill: #3d4a1f; fill-opacity: .5; }
  .regions .light { fill-opacity: .25; }
  .timeline { height: 120px; margin-top: 9px; }
  .track { display: flex; width: 766px; height: 71px; overflow: hidden; }
  .controls { width: 90px; height: 71px; flex: none; fill: #ccc; }
  .year { flex: none; width: 39px; border-left: 1px dotted #666; text-align: center; line-height: 73px; }
  .hscroll { display: flex; align-items: center; height: 17px; background: #f1f1f1; }
  .hscroll svg { width: 17px; height: 17px; }
  .hscroll i { width: 708px; height: 13px; margin-right: 24px; background: #c1c1c1; }
  .map-source { margin-top: 8px; letter-spacing: .01px; }
  .side { width: 731px; }
  .functions { height: 104px; }
  nav { display: grid; grid-template-columns: 36px 63px 48px 139px 199px 1fr; height: 72px; }
  nav a { border-left: 1px solid #666; text-align: center; line-height: 74px; color: #333; text-decoration: none; letter-spacing: .18px; white-space: nowrap; }
  nav a:first-child { border-left: 0; }
  .sorted { height: 230px; margin-top: 16px; }
  .sorted svg { width: 729px; height: 198px; }
  .sorted text, .series text { fill: #444; font-size: 11px; }
  .grid { stroke: #666; stroke-width: 1; }
  .series { height: 231px; margin-top: 8px; }
  .series svg { width: 729px; height: 200px; }
  .series polyline { fill: none; stroke: #f90; stroke-width: 2; }
  .series circle { fill: #fff; stroke: #f90; stroke-width: 1.800; }
  .compare { height: 333px; margin-top: 9px; }
  .table-head { display: flex; height: 19px; letter-spacing: .15px; line-height: 25px; }
  .region { display: flex; justify-content: space-between; width: 501px; padding: 0 3px 0 10px; border-right: 1px solid #0f77ad; }
  .region svg { width: 8px; height: 6px; margin-top: 8px; fill: #aaa; }
  .value-head { padding-left: 10px; }
  .table-body { display: flex; justify-content: space-between; height: 282px; overflow: hidden; letter-spacing: .2px; }
  .table-rows { width: 712px; }
  .table-row { display: flex; height: 23px; line-height: 21px; }
  .table-row:nth-child(odd) { background: #ccc; }
  .name { display: flex; align-items: center; gap: 5px; width: 501px; padding: 2px 0 0 10px; border-right: 1px solid #0f77ad; }
  .name svg { width: 8px; height: 8px; margin-top: 1px; }
  .value { flex: 1; padding: 2px 8px 0 0; text-align: right; }
  .vscroll { display: flex; flex-direction: column; align-items: center; width: 17px; background: #f1f1f1; }
  .vscroll svg { width: 17px; height: 17px; }
  .vscroll i { width: 13px; height: 127px; background: #c1c1c1; }
  .vscroll .down { margin-top: auto; }
</style>
